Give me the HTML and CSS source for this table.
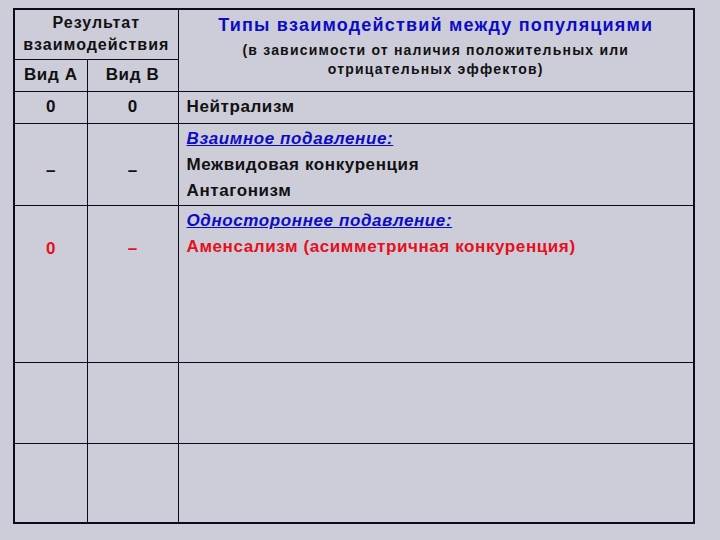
FILE: index.html
```html
<!DOCTYPE html>
<html lang="ru">
<head>
<meta charset="utf-8">
<title>Типы взаимодействий</title>
<link rel="stylesheet" href="styles.css">
</head>
<body>
<table class="grid">
  <colgroup>
    <col class="c1">
    <col class="c2">
    <col class="c3">
  </colgroup>
  <tr class="r-h1">
    <td colspan="2" class="head-left">Результат<br>взаимодействия</td>
    <td rowspan="2" class="head-title">
      <div class="title">Типы взаимодействий между популяциями</div>
      <div class="subtitle">(в зависимости от наличия положительных или<br>отрицательных эффектов)</div>
    </td>
  </tr>
  <tr class="r-h2">
    <td class="species">Вид А</td>
    <td class="species">Вид В</td>
  </tr>
  <tr class="r-1">
    <td class="sign mid">0</td>
    <td class="sign mid">0</td>
    <td class="desc mid">Нейтрализм</td>
  </tr>
  <tr class="r-2">
    <td class="sign p2">–</td>
    <td class="sign p2">–</td>
    <td class="desc"><span class="cat">Взаимное подавление:</span><br>Межвидовая конкуренция<br>Антагонизм</td>
  </tr>
  <tr class="r-3">
    <td class="sign p3 red">0</td>
    <td class="sign p3 red">–</td>
    <td class="desc"><span class="cat">Одностороннее подавление:</span><br><span class="red">Аменсализм (асимметричная конкуренция)</span></td>
  </tr>
  <tr class="r-4"><td class="empty"></td><td class="empty"></td><td class="empty"></td></tr>
  <tr class="r-5"><td class="empty"></td><td class="empty"></td><td class="empty"></td></tr>
</table>
</body>
</html>
```
FILE: styles.css
```css
html, body {
  margin: 0;
  padding: 0;
  background: #cdccd9;
}
body {
  padding: 8px 0 0 13px;
  font-family: "Liberation Sans", Arial, sans-serif;
  font-weight: bold;
  color: #111;
}
.grid {
  border-collapse: collapse;
  width: 682px;
  table-layout: fixed;
  border: 2px solid #0b0b1c;
}
.c1 { width: 73px; }
.c2 { width: 91px; }
.grid td {
  border: 1px solid #0b0b1c;
  padding: 0;
  vertical-align: top;
}
.r-h1 { height: 50px; }
.r-h2 { height: 32px; }
.r-1 { height: 32px; }
.r-2 { height: 82px; }
.r-3 { height: 157px; }
.r-4 { height: 81px; }
.r-5 { height: 80px; }

.grid .head-left {
  text-align: center;
  font-size: 16px;
  line-height: 22px;
  padding-top: 2px;
  letter-spacing: 1px;
}
.grid .species {
  text-align: center;
  vertical-align: middle;
  font-size: 17px;
  line-height: 26px;
  letter-spacing: 0.6px;
}
.grid .head-title {
  text-align: center;
  padding-top: 3px;
}
.title {
  color: #0c0cc4;
  font-size: 18px;
  line-height: 24px;
  letter-spacing: 1.2px;
}
.subtitle {
  font-size: 14px;
  line-height: 19px;
  letter-spacing: 1.2px;
  margin-top: 4px;
}
.grid .sign {
  text-align: center;
  font-size: 17px;
  line-height: 26px;
}
.grid .mid { vertical-align: middle; }
.grid .p2 { padding-top: 34px; }
.grid .p3 { padding-top: 30px; }
.grid .desc {
  padding-left: 8px;
  padding-top: 2px;
  font-size: 17px;
  line-height: 26px;
  letter-spacing: 0.6px;
}
.grid .desc.mid { padding-top: 0; }
.cat {
  color: #0c0cc4;
  font-style: italic;
  text-decoration: underline;
}
.red { color: #e5101c; }
```
